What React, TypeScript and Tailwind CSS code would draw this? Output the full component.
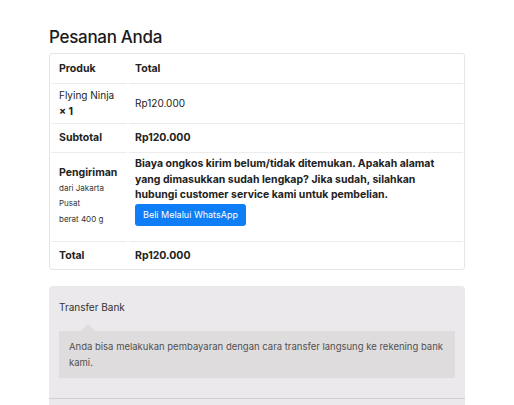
import React from "react";

const font = { fontFamily: 'Inter, "Noto Sans", sans-serif' };

function Row({ left, right, first, className = "" }: { left: React.ReactNode; right: React.ReactNode; first?: boolean; className?: string }) {
  return (
    <div className={`flex gap-[2px] ${className}`}>
      <div className={`w-[76px] shrink-0 pl-[8px] pr-[4px] flex flex-col justify-center ${first ? "" : "border-t border-[#ececec]"}`}>{left}</div>
      <div className={`flex-1 pl-[6px] pr-[8px] flex flex-col justify-center ${first ? "" : "border-t border-[#ececec]"}`}>{right}</div>
    </div>
  );
}

export default function App() {
  return (
    <div className="w-[514px] h-[405px] overflow-hidden bg-white" style={font}>
      <div className="ml-[49px] w-[416px] pt-[25px]">
        <h3 className="text-[17px] leading-[24px] font-medium tracking-[-0.3px] text-[#1a1a1a] mb-[4px]">Pesanan Anda</h3>
        <div className="border border-[#e6e6e6] rounded-[3px] text-[10px] leading-[15.5px] text-[#222] px-[1px]">
          <Row first className="h-[29px]" left={<span className="font-bold text-[10.5px]">Produk</span>} right={<span className="font-bold text-[10.5px]">Total</span>} />
          <Row
            className="h-[40px]"
            left={<><span>Flying Ninja</span><span className="font-bold text-[10.5px]">× 1</span></>}
            right={<span>Rp120.000</span>}
          />
          <Row className="h-[29px]" left={<span className="font-bold text-[10.5px]">Subtotal</span>} right={<span className="font-bold text-[10.5px]">Rp120.000</span>} />
          <Row
            className="h-[89px]"
            left={
              <div className="pb-[2px]">
                <div className="font-bold text-[10.5px]">Pengiriman</div>
                <div className="text-[8px] text-[#333]">dari Jakarta</div>
                <div className="text-[8px] text-[#333]">Pusat</div>
                <div className="text-[8px] text-[#333]">berat 400 g</div>
              </div>
            }
            right={
              <div className="pb-[14px] pt-[2px]">
                <div className="font-bold text-[10.5px]">Biaya ongkos kirim belum/tidak ditemukan. Apakah alamat yang dimasukkan sudah lengkap? Jika sudah, silahkan hubungi customer service kami untuk pembelian.</div>
                <button className="mt-[1px] h-[22px] w-[111px] rounded-[3px] bg-[#0d7ef5] text-white text-[9px]">Beli Melalui WhatsApp</button>
              </div>
            }
          />
          <Row className="h-[28px]" left={<span className="font-bold text-[10.5px]">Total</span>} right={<span className="font-bold text-[10.5px]">Rp120.000</span>} />
        </div>
        <div className="mt-[16px] bg-[#ebe9eb] rounded-t-[4px] h-[120px]">
          <div className="px-[10px] pt-[14px]">
            <div className="text-[10px] leading-[15px] text-[#333]">Transfer Bank</div>
            <div className="relative mt-[16px] bg-[#dfdcde] text-[9.5px] leading-[15.5px] text-[#515151] pl-[10px] pr-[8px] pt-[8px] pb-[8px]">
              <div className="absolute -top-[7px] left-[22px] w-0 h-0 border-l-[7px] border-r-[7px] border-b-[7px] border-l-transparent border-r-transparent border-b-[#dfdcde]" />
              Anda bisa melakukan pembayaran dengan cara transfer langsung ke rekening bank kami.
            </div>
          </div>
          <div className="mt-[20px] border-b border-[#d3ced2]" />
        </div>
      </div>
    </div>
  );
}
